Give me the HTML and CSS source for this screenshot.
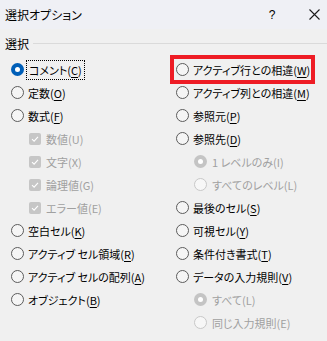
FILE: index.html
```html
<!DOCTYPE html>
<html lang="ja">
<head>
    <meta charset="UTF-8">
    <title>選択オプション</title>
    <link rel="stylesheet" href="styles.css">
</head>
<body>
    <div class="dialog">
        <div class="titlebar">
            <span class="title">選択オプション</span>
            <span class="help">?</span>
            <span class="close">
                <svg width="11" height="11" viewBox="0 0 11 11"><path d="M0.5 0.5 L10.5 10.5 M10.5 0.5 L0.5 10.5" stroke="#1a1a1a" stroke-width="1.1" fill="none"/></svg>
            </span>
        </div>

        <div class="content">
            <div class="group-label">
                <span>選択</span>
                <span class="rule"></span>
            </div>

            <div class="columns">
                <div class="col">
                    <div class="row"><span class="radio checked"></span><span class="label focus">コメント(<u>C</u>)</span></div>
                    <div class="row"><span class="radio"></span><span class="label">定数(<u>O</u>)</span></div>
                    <div class="row"><span class="radio"></span><span class="label">数式(<u>F</u>)</span></div>
                    <div class="row sub disabled"><span class="check"><svg width="8" height="8" viewBox="0 0 8 8"><path d="M1 4.2 L3.1 6.2 L7 1.8" stroke="#fff" stroke-width="1.1" fill="none"/></svg></span><span class="label">数値(U)</span></div>
                    <div class="row sub disabled"><span class="check"><svg width="8" height="8" viewBox="0 0 8 8"><path d="M1 4.2 L3.1 6.2 L7 1.8" stroke="#fff" stroke-width="1.1" fill="none"/></svg></span><span class="label">文字(X)</span></div>
                    <div class="row sub disabled"><span class="check"><svg width="8" height="8" viewBox="0 0 8 8"><path d="M1 4.2 L3.1 6.2 L7 1.8" stroke="#fff" stroke-width="1.1" fill="none"/></svg></span><span class="label">論理値(G)</span></div>
                    <div class="row sub disabled"><span class="check"><svg width="8" height="8" viewBox="0 0 8 8"><path d="M1 4.2 L3.1 6.2 L7 1.8" stroke="#fff" stroke-width="1.1" fill="none"/></svg></span><span class="label">エラー値(E)</span></div>
                    <div class="row"><span class="radio"></span><span class="label">空白セル(<u>K</u>)</span></div>
                    <div class="row"><span class="radio"></span><span class="label">アクティブ セル領域(<u>R</u>)</span></div>
                    <div class="row"><span class="radio"></span><span class="label">アクティブ セルの配列(<u>A</u>)</span></div>
                    <div class="row"><span class="radio"></span><span class="label">オブジェクト(<u>B</u>)</span></div>
                </div>

                <div class="col">
                    <div class="row"><span class="radio"></span><span class="label">アクティブ行との相違(<u>W</u>)</span></div>
                    <div class="row"><span class="radio"></span><span class="label">アクティブ列との相違(<u>M</u>)</span></div>
                    <div class="row"><span class="radio"></span><span class="label">参照元(<u>P</u>)</span></div>
                    <div class="row"><span class="radio"></span><span class="label">参照先(<u>D</u>)</span></div>
                    <div class="row sub disabled"><span class="radio checked"></span><span class="label">1 レベルのみ(I)</span></div>
                    <div class="row sub disabled"><span class="radio"></span><span class="label">すべてのレベル(L)</span></div>
                    <div class="row"><span class="radio"></span><span class="label">最後のセル(<u>S</u>)</span></div>
                    <div class="row"><span class="radio"></span><span class="label">可視セル(<u>Y</u>)</span></div>
                    <div class="row"><span class="radio"></span><span class="label">条件付き書式(<u>T</u>)</span></div>
                    <div class="row"><span class="radio"></span><span class="label">データの入力規則(<u>V</u>)</span></div>
                    <div class="row sub disabled"><span class="radio checked"></span><span class="label">すべて(L)</span></div>
                    <div class="row sub disabled"><span class="radio"></span><span class="label">同じ入力規則(E)</span></div>
                </div>
            </div>

            <!-- 注目枠 -->
            <div class="highlight"></div>
        </div>
    </div>
</body>
</html>
```

FILE: styles.css
```css
* {
    margin: 0;
    padding: 0;
    box-sizing: border-box;
}

body {
    font-family: "Noto Sans CJK JP", "Noto Sans", sans-serif;
    font-feature-settings: "palt";
    font-size: 12px;
    color: #000;
    background-color: #f0f0f0;
    width: 327px;
    height: 341px;
    overflow: hidden;
}

.dialog {
    width: 327px;
    height: 341px;
    background-color: #f0f0f0;
}

.titlebar {
    height: 29px;
    background-color: #eff0f5;
    display: flex;
    align-items: center;
    padding-left: 5px;
}

.title {
    flex: 1;
    font-size: 12px;
}

.help {
    width: 20px;
    text-align: center;
    font-family: "Liberation Sans", sans-serif;
    font-size: 12px;
    margin-right: 27px;
}

.close {
    width: 11px;
    height: 11px;
    display: flex;
    margin-right: 7px;
}

.content {
    position: relative;
    padding-top: 6px;
}

.group-label {
    display: flex;
    align-items: center;
    gap: 4px;
    padding-left: 5px;
    height: 16px;
}

.rule {
    flex: 1;
    height: 1px;
    background-color: #dadada;
}

.columns {
    display: grid;
    grid-template-columns: 165px 1fr;
    padding-left: 11px;
    padding-top: 7px;
    font-size: 11px;
}

.row {
    height: 23px;
    display: flex;
    align-items: center;
    gap: 4px;
    white-space: nowrap;
}

.row.sub {
    padding-left: 18px;
    gap: 5px;
}

.disabled {
    color: #a0a0a0;
}

.radio {
    width: 13px;
    height: 13px;
    border: 1px solid #5c5c5c;
    border-radius: 50%;
    background-color: #f5f5f5;
    flex-shrink: 0;
    position: relative;
}

.radio.checked {
    border: none;
    background-color: #005fb8;
}

.radio.checked::after {
    content: "";
    position: absolute;
    left: 4px;
    top: 4px;
    width: 5px;
    height: 5px;
    border-radius: 50%;
    background-color: #fff;
}

.disabled .radio {
    border-color: #c8c8c8;
    background-color: #f7f7f7;
}

.disabled .radio.checked {
    background-color: #c4c4c4;
}

.check {
    width: 12px;
    height: 12px;
    border-radius: 2px;
    background-color: #c6c6c6;
    display: flex;
    align-items: center;
    justify-content: center;
    flex-shrink: 0;
}

.label u {
    text-underline-offset: 2px;
}

.focus {
    outline: 1px dotted #000;
    outline-offset: 1px;
    padding: 0 1px;
}

.highlight {
    position: absolute;
    left: 170px;
    top: 26px;
    width: 145px;
    height: 29px;
    border: 4px solid #ee1c25;
}
```
